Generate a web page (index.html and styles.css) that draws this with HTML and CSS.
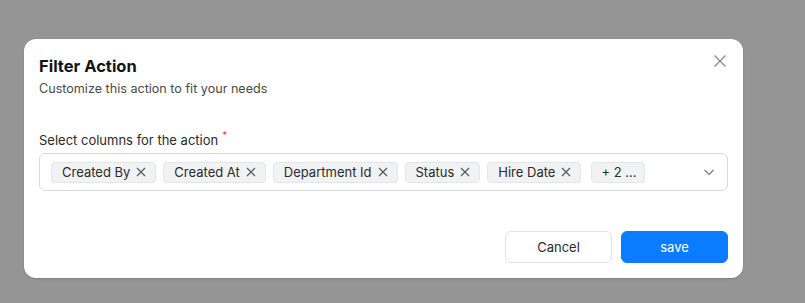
FILE: index.html
```html
<!DOCTYPE html>
<html>
<head>
<meta charset="utf-8">
<link rel="stylesheet" href="styles.css">
</head>
<body>
<div class="modal">
  <button class="close" aria-label="Close">
    <svg width="14" height="14" viewBox="0 0 14 14"><path d="M1.5 1.5L12.5 12.5M12.5 1.5L1.5 12.5" stroke="#8a8a8a" stroke-width="1.3" fill="none"/></svg>
  </button>
  <h1 class="title">Filter Action</h1>
  <p class="subtitle">Customize this action to fit your needs</p>
  <label class="label">Select columns for the action<span class="req">*</span></label>
  <div class="select">
    <div class="tags">
      <span class="tag">Created By<svg class="x" viewBox="0 0 10 10"><path d="M1 1L9 9M9 1L1 9"/></svg></span>
      <span class="tag">Created At<svg class="x" viewBox="0 0 10 10"><path d="M1 1L9 9M9 1L1 9"/></svg></span>
      <span class="tag">Department Id<svg class="x" viewBox="0 0 10 10"><path d="M1 1L9 9M9 1L1 9"/></svg></span>
      <span class="tag">Status<svg class="x" viewBox="0 0 10 10"><path d="M1 1L9 9M9 1L1 9"/></svg></span>
      <span class="tag">Hire Date<svg class="x" viewBox="0 0 10 10"><path d="M1 1L9 9M9 1L1 9"/></svg></span>
      <span class="tag more">+ 2 ...</span>
    </div>
    <svg class="chev" width="12" height="12" viewBox="0 0 12 12"><path d="M1.5 4L6 8.5L10.5 4" stroke="#777" stroke-width="1.2" fill="none"/></svg>
  </div>
  <div class="footer">
    <button class="btn cancel">Cancel</button>
    <button class="btn save">save</button>
  </div>
</div>
</body>
</html>
```
FILE: styles.css
```css
html, body {
  margin: 0;
  padding: 0;
  height: 100%;
}
body {
  background: #959595;
  font-family: Inter, "Noto Sans", sans-serif;
  color: #1a1a1a;
  overflow: hidden;
}
.modal {
  position: relative;
  box-sizing: border-box;
  margin: 39px 0 0 24px;
  width: 719px;
  height: 239px;
  background: #fff;
  border-radius: 12px;
  padding: 17px 15px 15px 15px;
  display: flex;
  flex-direction: column;
  box-shadow: 0 1px 2px rgba(0, 0, 0, 0.15);
}
.close {
  position: absolute;
  top: 15px;
  right: 16px;
  width: 14px;
  height: 14px;
  padding: 0;
  border: none;
  background: none;
  display: flex;
}
.title {
  margin: 0;
  font-size: 16.5px;
  line-height: 20px;
  font-weight: 700;
  color: #141414;
}
.subtitle {
  margin: 4px 0 0;
  font-size: 12.6px;
  line-height: 18px;
  color: #4a4a4a;
}
.label {
  margin-top: 33px;
  font-size: 13px;
  line-height: 18px;
  color: #2a2a2a;
  display: flex;
}
.req {
  color: #e5484d;
  font-size: 10px;
  line-height: 10px;
  margin-left: 4px;
  margin-top: -1px;
}
.select {
  margin-top: 4px;
  box-sizing: border-box;
  height: 38px;
  border: 1px solid #d8dadd;
  border-radius: 6px;
  display: flex;
  align-items: center;
  padding: 0 12px 0 11px;
}
.tags {
  flex: 1;
  display: flex;
  gap: 7px;
}
.tag {
  box-sizing: border-box;
  height: 21px;
  display: flex;
  align-items: center;
  gap: 6px;
  padding: 0 9px 0 10px;
  background: #f1f2f4;
  border: 1px solid #e3e5e8;
  border-radius: 4px;
  font-size: 13px;
  color: #2b2b2b;
}
.tag.more {
  padding: 0 7px 0 9px;
  margin-left: 3px;
}
.x {
  width: 10px;
  height: 10px;
  stroke: #555;
  stroke-width: 1.1;
  fill: none;
}
.chev {
  flex: none;
}
.footer {
  margin-top: auto;
  display: flex;
  justify-content: flex-end;
  gap: 9px;
}
.btn {
  width: 107px;
  height: 32px;
  border-radius: 6px;
  font-family: Inter, "Noto Sans", sans-serif;
  font-size: 13px;
  padding: 0;
}
.cancel {
  background: #fff;
  border: 1px solid #dfe1e4;
  color: #2a2a2a;
}
.save {
  background: #0a7cff;
  border: 1px solid #0a7cff;
  color: #fff;
}
```
